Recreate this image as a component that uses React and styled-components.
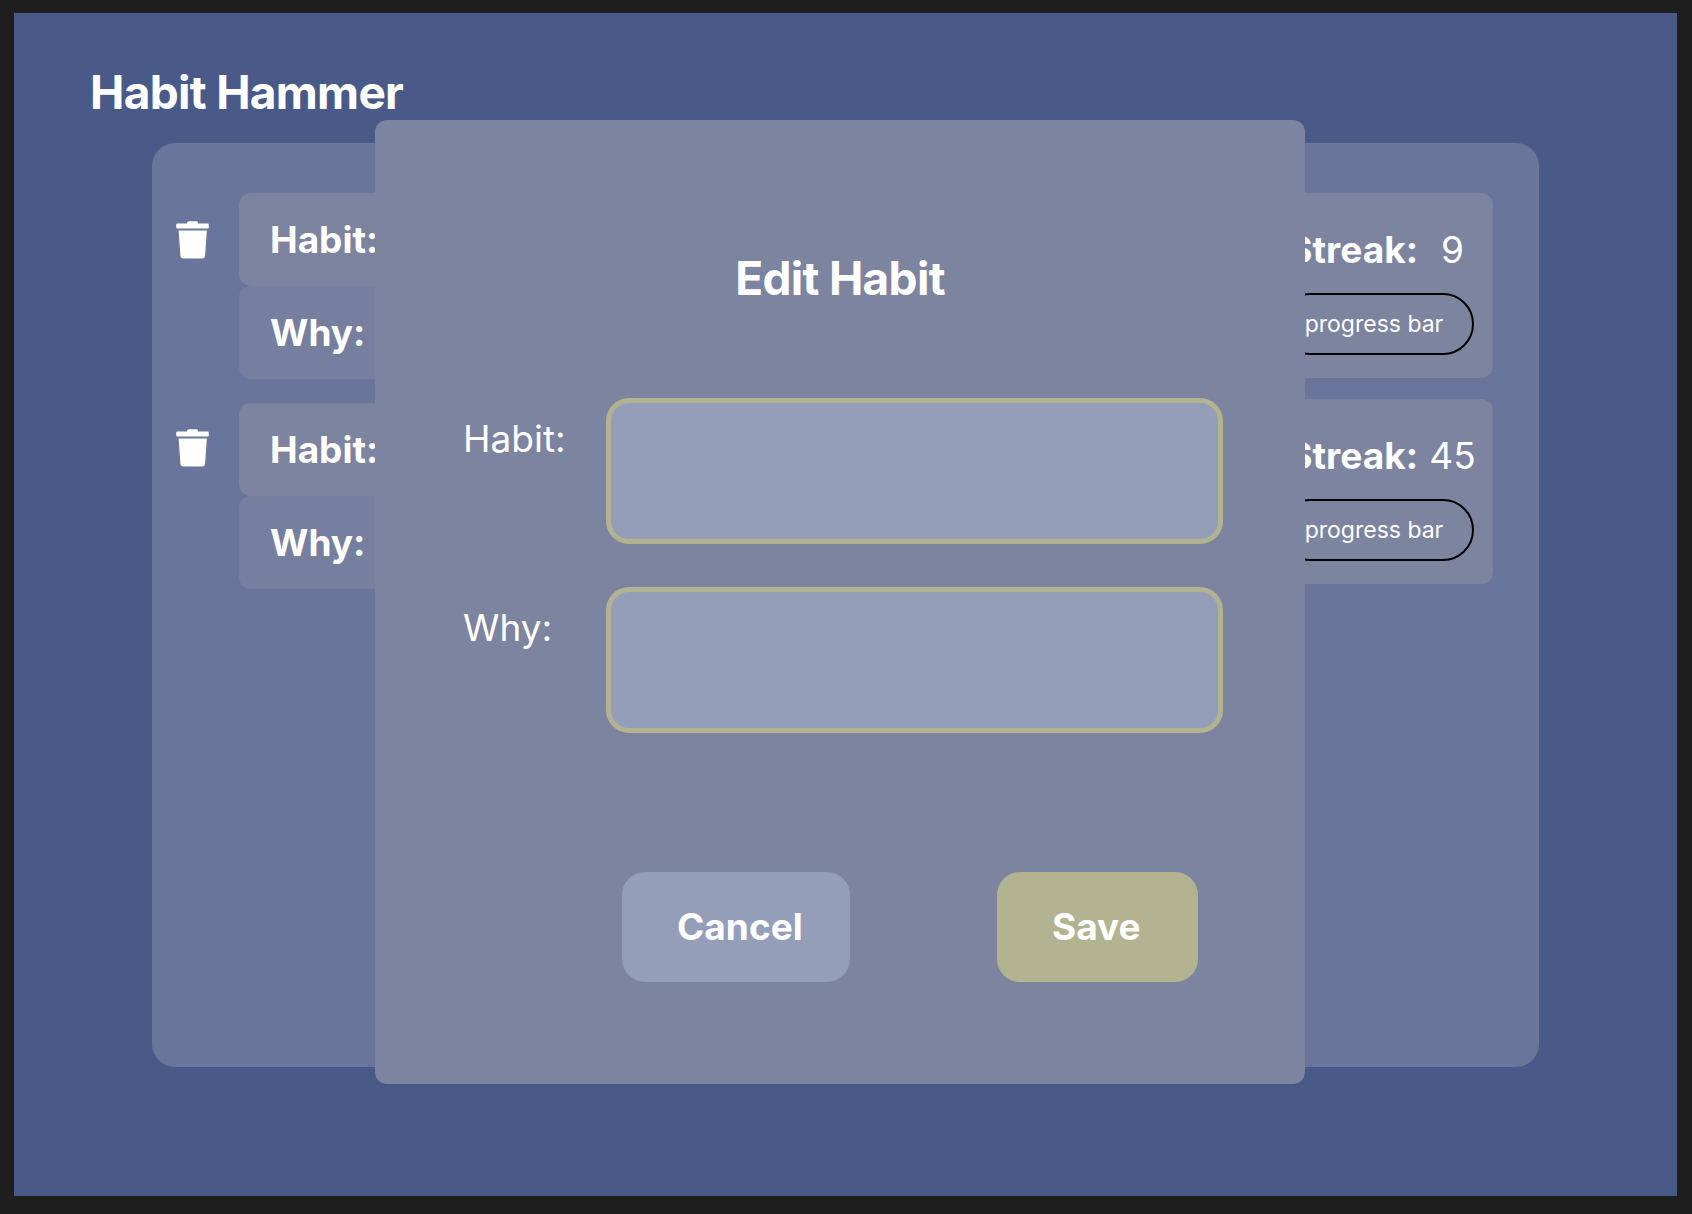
import React from 'react';
import styled, { createGlobalStyle } from 'styled-components';

const GlobalStyle = createGlobalStyle`
  *, *::before, *::after { box-sizing: border-box; }
  body {
    margin: 0;
    background: #1e1e1e;
    color: #ffffff;
    font-family: Inter, "Liberation Sans", sans-serif;
    font-size: 37px;
    line-height: 45px;
  }
  button, textarea { font: inherit; color: inherit; }
`;

const Page = styled.div`
  display: flex;
  min-height: 100vh;
  padding: 13px 15px 18px 14px;
`;

const Screen = styled.main`
  flex: 1;
  display: flex;
  flex-direction: column;
  gap: 23px;
  padding: 51px 138px 129px;
  background: #4a5a88;
`;

const Brand = styled.h1`
  margin: 0 0 0 -62px;
  font-size: 46px;
  line-height: 56px;
  font-weight: 700;
  letter-spacing: -0.015em;
`;

const Panel = styled.section`
  flex: 1;
  display: flex;
  align-items: flex-start;
  padding: 50px 46px 50px 24px;
  border-radius: 23px;
  background: #6a759b;
`;

const ActionColumn = styled.div`
  display: flex;
  flex-direction: column;
  gap: 170px;
  padding-top: 28px;
  margin-right: 30px;
`;

const IconButton = styled.button`
  display: block;
  width: 33px;
  height: 38px;
  padding: 0;
  border: 0;
  background: none;
  cursor: pointer;

  svg { display: block; }
`;

const HabitColumn = styled.div`
  flex: 1;
  display: flex;
  flex-direction: column;
  gap: 24px;
`;

const Detail = styled.div`
  padding: 24px 31px;
  border-radius: 12px;
  background: ${(p) => (p.$muted ? '#767f9d' : '#7d84a0')};
  font-weight: 700;
`;

const StreakColumn = styled.div`
  display: flex;
  flex-direction: column;
  gap: 21px;
  width: 237px;
`;

const StreakCard = styled.div`
  display: flex;
  flex-direction: column;
  gap: 21px;
  padding: 34px 15px 23px;
  border-radius: 12px;
  background: #7d84a0;
`;

const StreakLine = styled.div`
  display: flex;
  justify-content: flex-end;
  gap: 9px;
  white-space: nowrap;
`;

const StreakLabel = styled.span`
  font-weight: 700;
`;

const StreakCount = styled.span`
  min-width: 51px;
  text-align: center;
`;

const ProgressBar = styled.div`
  display: flex;
  align-items: center;
  justify-content: center;
  height: 62px;
  margin: 0 4px 0 8px;
  padding-right: 5px;
  border: 2px solid #000000;
  border-radius: 31px;
  font-size: 23px;
  line-height: 28px;
`;

const Overlay = styled.div`
  position: absolute;
  inset: 0;
  padding: 120px 387px 130px 375px;
`;

const Dialog = styled.form`
  display: flex;
  flex-direction: column;
  min-height: 100%;
  padding: 130px 82px 102px;
  border-radius: 12px;
  background: #7d84a0;
`;

const DialogTitle = styled.h2`
  margin: 0 0 92px;
  font-size: 46px;
  line-height: 56px;
  font-weight: 700;
  letter-spacing: -0.015em;
  text-align: center;
`;

const Fields = styled.div`
  display: flex;
  flex-direction: column;
  gap: 43px;
`;

const Field = styled.div`
  display: grid;
  grid-template-columns: 149px 1fr;
  align-items: start;
`;

const FieldLabel = styled.label`
  padding: 18px 0 0 6px;
`;

const FieldInput = styled.textarea`
  display: block;
  width: 100%;
  height: 146px;
  padding: 18px 24px;
  border: 5px solid #b2b391;
  border-radius: 23px;
  background: #949eb8;
  outline: none;
  resize: none;
`;

const Actions = styled.div`
  display: flex;
  justify-content: space-between;
  margin-top: auto;
  padding: 0 25px 0 165px;
`;

const Button = styled.button`
  width: ${(p) => (p.$primary ? '201px' : '228px')};
  padding: 32px 0 33px 55px;
  border: 0;
  border-radius: 23px;
  background: ${(p) => (p.$primary ? '#b2b391' : '#949eb8')};
  font-weight: 700;
  text-align: left;
  cursor: pointer;
`;

function TrashIcon() {
  return (
    <svg width="33" height="38" viewBox="0 0 33 38" fill="#ffffff" aria-hidden="true">
      <path d="M11 2.4C11 1 12 .3 13.2 .3h6.8c1.2 0 2.2.7 2.2 2.1h9.3c.8 0 1.3.5 1.3 1.3v2.5c0 .8-.5 1.3-1.3 1.3h-30C.7 7.500.2 7 .2 6.200V3.700c0-.8.5-1.3 1.3-1.3z" />
      <path d="M2.600 9.600h28.300L29.100 34.600c-.2 2-1.100 3-2.900 3H7.300c-1.800 0-2.700-1-2.900-3z" />
    </svg>
  );
}

const habits = [
  { id: 1, streak: 9 },
  { id: 2, streak: 45 },
];

export default function App() {
  return (
    <>
      <GlobalStyle />
      <Page>
        <Screen>
          <Brand>Habit Hammer</Brand>
          <Panel>
            <ActionColumn>
              {habits.map((h) => (
                <IconButton key={h.id} type="button" aria-label="Delete habit">
                  <TrashIcon />
                </IconButton>
              ))}
            </ActionColumn>
            <HabitColumn>
              {habits.map((h) => (
                <article key={h.id}>
                  <Detail>Habit:</Detail>
                  <Detail $muted>Why:</Detail>
                </article>
              ))}
            </HabitColumn>
            <StreakColumn>
              {habits.map((h) => (
                <StreakCard key={h.id}>
                  <StreakLine>
                    <StreakLabel>Streak:</StreakLabel>
                    <StreakCount>{h.streak}</StreakCount>
                  </StreakLine>
                  <ProgressBar>progress bar</ProgressBar>
                </StreakCard>
              ))}
            </StreakColumn>
          </Panel>
        </Screen>
      </Page>
      <Overlay>
        <Dialog role="dialog" aria-labelledby="dialog-title" onSubmit={(e) => e.preventDefault()}>
          <DialogTitle id="dialog-title">Edit Habit</DialogTitle>
          <Fields>
            <Field>
              <FieldLabel htmlFor="habit">Habit:</FieldLabel>
              <FieldInput id="habit" />
            </Field>
            <Field>
              <FieldLabel htmlFor="why">Why:</FieldLabel>
              <FieldInput id="why" />
            </Field>
          </Fields>
          <Actions>
            <Button type="button">Cancel</Button>
            <Button type="submit" $primary>Save</Button>
          </Actions>
        </Dialog>
      </Overlay>
    </>
  );
}
